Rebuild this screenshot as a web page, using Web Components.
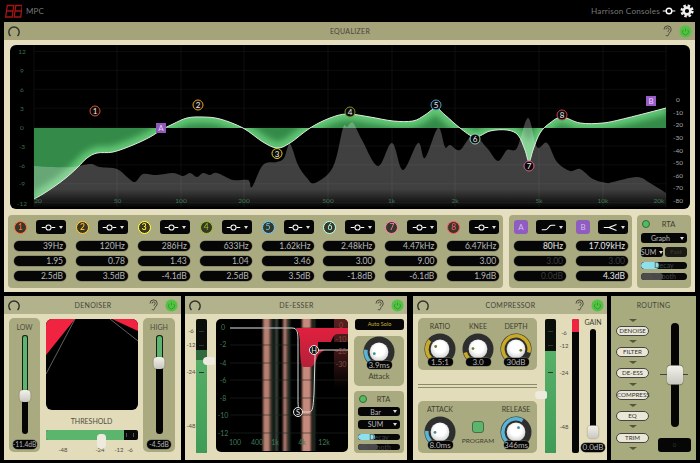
<!DOCTYPE html>
<html>
<head>
<meta charset="utf-8">
<title>MPC</title>
<style>
  html, body { margin: 0; background: #000; }
  body { width: 700px; height: 463px; overflow: hidden; font-family: Lato, "Liberation Sans", sans-serif; }
  #bottom { display: flex; padding: 4px 0 0 4px; }
  mpc-panel.eq { margin: 0 5px 0 4px; }
</style>
</head>
<body>
<mpc-topbar></mpc-topbar>
<mpc-panel class="eq" title="EQUALIZER"><mpc-equalizer></mpc-equalizer></mpc-panel>
<div id="bottom">
  <mpc-panel title="DENOISER" style="width:177px;margin-right:4px"><mpc-denoiser></mpc-denoiser></mpc-panel>
  <mpc-panel title="DE-ESSER" style="width:222px;margin-right:6px"><mpc-deesser></mpc-deesser></mpc-panel>
  <mpc-panel title="COMPRESSOR" style="width:194px;margin-right:4px"><mpc-compressor></mpc-compressor></mpc-panel>
  <mpc-routing></mpc-routing>
</div>

<script>
const FONT = 'Lato, "Liberation Sans", sans-serif';

// catmull-rom through the points, good enough for the curves on the graphs
function smooth(pts) {
    let d = `M${pts[0][0]} ${pts[0][1]}`;
    for (let i = 0; i < pts.length - 1; i++) {
        let p0 = pts[i - 1] || pts[i], p1 = pts[i], p2 = pts[i + 1], p3 = pts[i + 2] || p2;
        let c1x = p1[0] + (p2[0] - p0[0]) / 6, c1y = p1[1] + (p2[1] - p0[1]) / 6;
        let c2x = p2[0] - (p3[0] - p1[0]) / 6, c2y = p2[1] - (p3[1] - p1[1]) / 6;
        d += `C${c1x.toFixed(1)} ${c1y.toFixed(1)} ${c2x.toFixed(1)} ${c2y.toFixed(1)} ${p2[0]} ${p2[1]}`;
    }
    return d;
}

function scaleText(items, anchor, color, size) {
    return items.map(i => `<text x="${i[1]}" y="${i[2]}" text-anchor="${anchor}" fill="${color}" font-size="${size}" font-family='${FONT}'>${i[0]}</text>`).join("");
}

const ICONS = {
    peak: `<path d="M1 6H6M14 6H19" stroke="#fff" stroke-width="1.4"/><circle cx="10" cy="6" r="3.4" fill="none" stroke="#fff" stroke-width="1.4"/>`,
    low: `<path d="M1 9H6C10 9 10 3 14 3H19" fill="none" stroke="#fff" stroke-width="1.4"/>`,
    high: `<path d="M1 6H8L18 2M8 6L18 10" fill="none" stroke="#fff" stroke-width="1.4"/>`
};

class McTopbar extends HTMLElement {
    constructor() { super(); this.attachShadow({ mode: 'open' }); }
    connectedCallback() {
        this.shadowRoot.innerHTML = `
        <style>
            :host { display: flex; align-items: center; height: 22px; padding: 0 6px 0 4px; box-sizing: border-box; color: #777; font: 8px ${FONT}; }
            .mpc { margin-left: 4px; flex: 1; letter-spacing: .1px; }
            .who { font-size: 8.2px; letter-spacing: .2px; margin-right: 2px; }
            svg { display: block; }
        </style>
        <svg width="18" height="15" viewBox="0 0 18 15"><g fill="none" stroke="#a31616" stroke-width="1.3" transform="skewX(-8) translate(2 0)"><path d="M1.5 1.5H8V7H1.5ZM1.5 7V13H8V7"/><path d="M10 1.5H16.5V7H10ZM10 7V13H16.5V7"/></g></svg>
        <span class="mpc">MPC</span>
        <span class="who">Harrison Consoles</span>
        <svg width="14" height="12" viewBox="0 0 20 12" style="margin-right:4px"><circle cx="10" cy="6" r="4" fill="none" stroke="#fff" stroke-width="2"/><path d="M1 6H6M14 6H19" stroke="#fff" stroke-width="1.6"/></svg>
        <svg width="14" height="14" viewBox="0 0 14 14"><circle cx="7" cy="7" r="3.4" fill="none" stroke="#eee" stroke-width="2.6"/><circle cx="7" cy="7" r="5.3" fill="none" stroke="#eee" stroke-width="2.6" stroke-dasharray="2.4 1.76"/></svg>`;
    }
}
customElements.define('mpc-topbar', McTopbar);

class McPanel extends HTMLElement {
    constructor() { super(); this.attachShadow({ mode: 'open' }); }
    connectedCallback() {
        let small = this.getAttribute("title") !== "EQUALIZER";
        this.shadowRoot.innerHTML = `
        <style>
            :host { display: block; background: ${small ? "#e3dcba" : "#e6dfbf"}; }
            header { display: flex; align-items: center; height: 18px; padding: 0 3px 0 4px; background: ${small ? "#b2b28c" : "#a4a37a"}; color: #45453a; font: 7px ${FONT}; letter-spacing: .3px; }
            .l, .r { width: 30px; display: flex; }
            .r { justify-content: flex-end; }
            .t { flex: 1; text-align: center; }
            svg { display: block; }
            .ear { margin-right: 7px; }
        </style>
        <header>
            <div class="l"><svg width="12" height="12" viewBox="0 0 12 12"><path d="M2.5 11A5.2 5.2 0 1 1 9.5 11" fill="none" stroke="#2f2f28" stroke-width="1.4"/></svg></div>
            <span class="t">${this.getAttribute("title")}</span>
            <div class="r"><svg class="ear" width="9" height="12" viewBox="0 0 9 12"><path d="M1 4.5a3.6 3.6 0 0 1 7.2 0c0 2.6-2.4 3-2.6 5-.2 1.7-2.2 1.8-2.8.6M3 4.5a1.6 1.6 0 0 1 3.2 0c0 1.2-1.2 1.2-1.4 2.4" fill="none" stroke="#33332b" stroke-width=".8"/></svg>
            <svg width="13" height="13" viewBox="0 0 13 13"><circle cx="6.5" cy="6.5" r="6" fill="#52c243"/><path d="M4.3 4.8a3 3 0 1 0 4.4 0M6.5 3.5V6.5" fill="none" stroke="#3a9a33" stroke-width="1"/></svg></div>
        </header>
        <slot></slot>`;
    }
}
customElements.define('mpc-panel', McPanel);

class McPill extends HTMLElement {
    constructor() { super(); this.attachShadow({ mode: 'open' }); }
    connectedCallback() {
        let dim = this.hasAttribute("dim");
        let bright = this.hasAttribute("bright");
        this.shadowRoot.innerHTML = `
        <style>
            :host { display: block; height: 10px; line-height: 10px; box-sizing: border-box; background: #060606; border-radius: 5px; box-shadow: 0 0 0 .5px #6e6e5c; padding: 0 3px; text-align: right; color: ${dim ? "#3b3b3b" : bright ? "#e6e6e6" : "#b8b8b8"}; font: 8.5px/10px ${FONT}; white-space: nowrap; }
            :host([center]) { text-align: center; padding: 0; font-size: var(--pill-size, 8px); }
        </style><slot></slot>`;
    }
}
customElements.define('mpc-pill', McPill);

class McDrop extends HTMLElement {
    constructor() { super(); this.attachShadow({ mode: 'open' }); }
    connectedCallback() {
        let icon = this.getAttribute("icon");
        this.shadowRoot.innerHTML = `
        <style>
            :host { display: flex; align-items: center; justify-content: center; gap: 3px; background: #060606; border-radius: 3px; color: #bbb; font: 7px ${FONT}; height: var(--h, 14px); box-sizing: border-box; }
            svg { display: block; }
            i { width: 0; height: 0; border: 2px solid transparent; border-top: 3px solid #ddd; border-bottom: 0; }
            span { flex: 1; text-align: center; }
            :host([icon]) span { display: none; }
            :host([icon]) { padding-left: 1px; }
            :host(:not([icon])) { padding: 0 3px; }
        </style>
        ${icon ? `<svg width="15" height="9" viewBox="0 0 20 12">${ICONS[icon]}</svg>` : ""}
        <span><slot></slot></span><i></i>`;
    }
}
customElements.define('mpc-drop', McDrop);

class McBand extends HTMLElement {
    constructor() { super(); this.attachShadow({ mode: 'open' }); }
    connectedCallback() {
        let c = this.getAttribute("color");
        let n = this.getAttribute("n");
        let purple = n === "A" || n === "B";
        let dimq = this.hasAttribute("dimq"), dimg = this.hasAttribute("dimg"), br = purple ? "bright" : "";
        this.shadowRoot.innerHTML = `
        <style>
            :host { display: block; width: 52px; }
            .head { display: grid; grid-template-columns: 15px 30px; column-gap: 7px; align-items: center; margin-bottom: 7px; }
            .num { width: 11px; height: 11px; border: 1.5px solid ${c}; border-radius: 50%; background: #2a2a1e; color: ${c}; font: 8.5px/11px ${FONT}; text-align: center; filter: brightness(1.3); }
            .sq { width: 14px; height: 14px; border-radius: 3px; background: #8f5cc0; color: #d5bdf0; font: 8px/14px ${FONT}; text-align: center; }
            mpc-pill + mpc-pill { margin-top: 5px; }
        </style>
        <div class="head">
            ${purple ? `<div class="sq">${n}</div>` : `<div class="num">${n}</div>`}
            <mpc-drop icon="${this.getAttribute("kind") || "peak"}"></mpc-drop>
        </div>
        <mpc-pill ${br}>${this.getAttribute("f")}</mpc-pill>
        <mpc-pill ${dimq ? "dim" : br}>${this.getAttribute("q")}</mpc-pill>
        <mpc-pill ${dimg ? "dim" : br}>${this.getAttribute("g")}</mpc-pill>`;
    }
}
customElements.define('mpc-band', McBand);

class McSlide extends HTMLElement {
    constructor() { super(); this.attachShadow({ mode: 'open' }); }
    connectedCallback() {
        this.shadowRoot.innerHTML = `
        <style>
            :host { display: block; position: relative; height: 7px; background: #080808; border-radius: 4px; overflow: hidden; }
            b { display: block; height: 100%; width: ${this.getAttribute("fill")}; background: ${this.getAttribute("color")}; border-radius: 4px; }
            span { position: absolute; inset: 0; text-align: center; color: ${this.getAttribute("textc") || "#444"}; font: 7px/7px ${FONT}; }
        </style><b></b><span><slot></slot></span>`;
    }
}
customElements.define('mpc-slide', McSlide);

class McRta extends HTMLElement {
    constructor() { super(); this.attachShadow({ mode: 'open' }); }
    connectedCallback() {
        let graph = this.getAttribute("mode") === "graph";
        this.shadowRoot.innerHTML = `
        <style>
            :host { display: flex; flex-direction: column; --h: 10px; background: #a9aa80; border-radius: 4px; box-sizing: border-box; padding: 3px 4px; color: #40402f; font: 7.5px ${FONT}; }
            .top { display: flex; align-items: center; height: 12px; margin-bottom: 3px; }
            .led { width: 8px; height: 8px; border-radius: 50%; background: #55bb5f; border: 1px solid #2d6a39; box-sizing: border-box; margin-left: 1px; }
            .top span { flex: 1; text-align: center; }
            .two { display: grid; grid-template-columns: 22px 22px; gap: 2px; margin-top: 4px; }
            mpc-drop + mpc-drop { margin-top: 4px; }
            .blank { background: #1a1a14; border-radius: 3px; color: #3a3a30; text-align: center; font: 6.5px/10px ${FONT}; }
            mpc-slide { margin-top: 5px; }
        </style>
        <div class="top"><div class="led"></div><span>RTA</span></div>
        <mpc-drop>${graph ? "Graph" : "Bar"}</mpc-drop>
        ${graph ? `<div class="two"><mpc-drop>SUM</mpc-drop><div class="blank">Fast</div></div>`
                : `<mpc-drop>SUM</mpc-drop>`}
        <mpc-slide fill="40%" color="#8de0ee" textc="#3c4a4e">Decay</mpc-slide>
        <mpc-slide fill="48%" color="#4c4c4c" style="margin-top:4px">Smooth</mpc-slide>`;
    }
}
customElements.define('mpc-rta', McRta);

class McEqgraph extends HTMLElement {
    constructor() { super(); this.attachShadow({ mode: 'open' }); }
    connectedCallback() {
        const curve = [[34,199],[43,194],[55,186],[67,177],[78,167],[87,158],[97,153],[113,152],[133,145],[150,137],[161,130],[173,124],[187,118],[203,117],[220,119],[243,128],[263,142],[277,148],[290,143],[310,128],[330,118],[347,114],[370,117],[393,121],[413,121],[425,115],[436,108],[445,115],[460,128],[475,137],[490,131],[507,130],[518,135],[525,150],[529,162],[533,150],[540,133],[550,123],[562,117],[580,123],[603,123],[627,118],[666,108]];
        const spec = [[34,166],[50,167],[73,167],[90,164],[100,167],[117,169],[127,177],[135,182],[143,174],[157,175],[173,173],[183,176],[190,173],[197,177],[203,173],[210,175],[217,173],[233,180],[248,180],[252,187],[263,165],[277,162],[284,158],[290,144],[298,165],[307,178],[315,183],[333,167],[343,128],[347,127],[353,123],[362,140],[378,166],[392,143],[403,170],[418,143],[425,158],[438,128],[445,147],[450,145],[460,150],[473,135],[487,148],[498,161],[507,150],[517,148],[528,118],[537,147],[547,143],[557,162],[570,171],[580,169],[593,179],[607,183],[613,182],[637,177],[650,183],[666,193]];
        const cd = smooth(curve);
        const nodes = [[1,95,111,"#d9542f"],[2,198,105,"#e8a020"],[3,277,153.5,"#e8d020"],[4,350,112,"#7c9a20"],[5,436,105,"#4aa0d0"],[6,475,139,"#8fd0c0"],[7,529,166,"#d06090"],[8,562,115,"#d04050"]];
        let h = "", v = "";
        for (let i = 0; i < 9; i++) h += `<path d="M34 ${51.5 + i * 18.9}H666"/>`;
        [34,117,181,244,328,392,455,539,603,666].forEach(x => v += `<path d="M${x} 45V207"/>`);
        this.shadowRoot.innerHTML = `
        <style>
            :host { display: block; height: 164px; background: #000; border-radius: 6px; overflow: hidden; }
            svg { display: block; }
        </style>
        <svg width="680" height="164" viewBox="10 45 680 164">
            <defs>
                <clipPath id="c"><path d="${cd}L666 128H34Z"/></clipPath>
                <filter id="b" x="-5%" y="-20%" width="110%" height="140%"><feGaussianBlur stdDeviation="3"/></filter>
                <linearGradient id="s" x1="0" y1="0" x2="0" y2="1" gradientUnits="objectBoundingBox"><stop offset=".8" stop-color="#fff" stop-opacity=".25"/><stop offset="1" stop-color="#fff" stop-opacity=".02"/></linearGradient>
            </defs>
            <g stroke="#141414" stroke-width=".6">${h}</g>
            <g stroke="#1a1a1a" stroke-width=".6">${v}</g>
            <g clip-path="url(#c)">
                <rect x="34" y="100" width="632" height="110" fill="#348a48"/>
                <path d="${cd}" fill="none" stroke="#62c874" stroke-width="12" filter="url(#b)"/>
            </g>
            <path d="${smooth(spec)}L666 207H34Z" fill="url(#s)"/>
            <path d="${cd}" fill="none" stroke="#dfe8dc" stroke-width="1"/>
            ${scaleText([["12",22,53.5],["9",22,72.5],["6",22,91.5],["3",22,110.5],["0",22,129.5],["-3",22,148.5],["-6",22,167.5],["-9",22,186],["-12",22,205.5]], "middle", "#3b6e4b", 6.5)}
            ${scaleText([["20",38,203],["50",117.5,203],["100",181,203],["200",244,203],["500",328,203],["1k",391.5,203],["2k",455,203],["5k",539,203],["10k",603,203],["20k",659,203]], "middle", "#3f7a58", 6.5)}
            ${scaleText([["0",678,102],["-10",678,114.5],["-20",678,127],["-30",678,139.5],["-40",678,152.5],["-50",678,165],["-60",678,177.5],["-70",678,190],["-80",678,202.5]], "middle", "#a8a8a8", 6.5)}
            ${nodes.map(n => `<circle cx="${n[1]}" cy="${n[2]}" r="5" fill="#0a0a0a" stroke="${n[3]}" stroke-width="1"/><text x="${n[1]}" y="${n[2] + 3}" text-anchor="middle" fill="#eee" font-size="8" font-family='${FONT}'>${n[0]}</text>`).join("")}
            <rect x="156" y="123" width="10" height="10" fill="#9058b8"/><text x="161" y="131" text-anchor="middle" fill="#e4d4f2" font-size="8" font-family='${FONT}'>A</text>
            <rect x="646" y="96" width="10" height="10" fill="#9a5cc8"/><text x="651" y="104" text-anchor="middle" fill="#e4d4f2" font-size="8" font-family='${FONT}'>B</text>
        </svg>`;
    }
}
customElements.define('mpc-eqgraph', McEqgraph);

class McEqualizer extends HTMLElement {
    constructor() { super(); this.attachShadow({ mode: 'open' }); }
    connectedCallback() {
        const bands = [
            [1,"#d9542f","39Hz","1.95","2.5dB"],[2,"#e8a020","120Hz","0.78","3.5dB"],[3,"#e8d020","286Hz","1.43","-4.1dB"],[4,"#7c9a20","633Hz","1.04","2.5dB"],
            [5,"#4aa0d0","1.62kHz","3.46","3.5dB"],[6,"#8fd0c0","2.48kHz","3.00","-1.8dB"],[7,"#d06090","4.47kHz","9.00","-6.1dB"],[8,"#d04050","6.47kHz","3.00","1.9dB"]];
        this.shadowRoot.innerHTML = `
        <style>
            :host { display: block; padding: 5px 5px 4px 6px; height: 252px; box-sizing: border-box; }
            .row { display: flex; margin: 6px -1px 0 -2px; gap: 5px; }
            .sec { height: 73px; box-sizing: border-box; background: #a9aa80; border-radius: 4px; padding: 5px 6px; display: flex; gap: 10px; }
            .eq { width: 495px; gap: 9.9px; }
            .ab { width: 123px; margin-left: 1px; padding-left: 5px; }
            mpc-rta { width: 54px; height: 73px; }
        </style>
        <mpc-eqgraph></mpc-eqgraph>
        <div class="row">
            <div class="sec eq">${bands.map(b => `<mpc-band n="${b[0]}" color="${b[1]}" f="${b[2]}" q="${b[3]}" g="${b[4]}"></mpc-band>`).join("")}</div>
            <div class="sec ab">
                <mpc-band n="A" kind="low" f="80Hz" q="3.00" g="0.0dB" dimq dimg></mpc-band>
                <mpc-band n="B" kind="high" f="17.09kHz" q="3.00" g="4.3dB" dimq></mpc-band>
            </div>
            <mpc-rta mode="graph"></mpc-rta>
        </div>`;
    }
}
customElements.define('mpc-equalizer', McEqualizer);

// vertical fader: track, optional green part over the thumb
class McFader extends HTMLElement {
    constructor() { super(); this.attachShadow({ mode: 'open' }); }
    connectedCallback() {
        let w = this.getAttribute("w") || 6, h = this.getAttribute("h");
        let pos = +this.getAttribute("pos"), green = this.hasAttribute("green");
        let tw = this.getAttribute("tw") || 11, th = this.getAttribute("th") || 12;
        this.shadowRoot.innerHTML = `
        <style>
            :host { display: block; position: relative; width: ${w}px; height: ${h}px; background: #050505; border-radius: ${w / 2}px; }
            .g { position: absolute; left: 0; right: 0; top: 0; height: ${pos}px; background: #5cb56c; border-radius: ${w / 2}px ${w / 2}px 0 0; box-shadow: inset 0 0 0 1px #1a1a1a; }
            .t { position: absolute; left: 50%; top: ${pos}px; width: ${tw}px; height: ${th}px; transform: translate(-50%, -50%); background: linear-gradient(#f4f2ea, #c8c8c0); border-radius: 4px; box-shadow: 0 0 1px #333; }
        </style>
        ${green ? `<div class="g"></div>` : ""}<div class="t"></div>`;
    }
}
customElements.define('mpc-fader', McFader);

// level meter with the side handle
class McMeter extends HTMLElement {
    constructor() { super(); this.attachShadow({ mode: 'open' }); }
    connectedCallback() {
        let from = +this.getAttribute("from"), thumb = this.getAttribute("thumb");
        let ticks = [12, 26, 53].map(t => `<u style="top:${t}px"></u>`).join("");
        this.shadowRoot.innerHTML = `
        <style>
            :host { display: block; position: relative; width: 11px; height: 134px; background: #0a0f0a; border-radius: 2px; }
            .g { position: absolute; left: 0; right: 0; bottom: 0; top: ${from}px; background: linear-gradient(#58b068, #3f9c57); border-radius: 0 0 2px 2px; }
            .dark { position: absolute; left: 0; right: 0; top: ${from}px; height: ${this.getAttribute("dark") || 0}px; background: #2f6b3e; }
            u { position: absolute; left: 3px; width: 5px; height: 1px; background: #333; }
            .t { position: absolute; left: ${this.getAttribute("tleft") || 7}px; top: ${thumb}px; width: 12px; height: 8px; transform: translateY(-50%); background: #eeeadf; border-radius: 4px 2px 2px 4px; }
        </style>
        <div class="g"></div><div class="dark"></div>${ticks}<div class="t"></div>`;
    }
}
customElements.define('mpc-meter', McMeter);

class McKnob extends HTMLElement {
    constructor() { super(); this.attachShadow({ mode: 'open' }); }
    connectedCallback() {
        let c = this.getAttribute("color"), a = +this.getAttribute("angle"), dot = +this.getAttribute("dot");
        const pt = (deg, r) => {
            let rad = (deg - 90) * Math.PI / 180;
            return [(16 + r * Math.cos(rad)).toFixed(2), (16 + r * Math.sin(rad)).toFixed(2)];
        };
        let s = pt(-135, 13.2), e = pt(-135 + a, 13.2), d = pt(dot, 5);
        this.shadowRoot.innerHTML = `
        <style>
            :host { display: block; position: relative; width: 32px; height: 33px; }
            svg { display: block; }
            mpc-pill { position: absolute; left: 3.5px; width: 25px; top: 25px; height: 8px; line-height: 8px; }
        </style>
        <svg width="32" height="32" viewBox="0 0 32 32">
            <defs><radialGradient id="k" cx=".5" cy=".4" r=".6"><stop offset=".5" stop-color="#fff"/><stop offset="1" stop-color="#cfcfcf"/></radialGradient></defs>
            <circle cx="16" cy="16" r="15.5" fill="#2e2e2e"/>
            <path d="M${s[0]} ${s[1]}A13.2 13.2 0 ${a > 180 ? 1 : 0} 1 ${e[0]} ${e[1]}" fill="none" stroke="${c}" stroke-width="3.6"/>
            <circle cx="16" cy="16" r="9.4" fill="url(#k)"/>
            <circle cx="${d[0]}" cy="${d[1]}" r="1.4" fill="${this.getAttribute("dotc") || "#6f7a20"}"/>
        </svg>
        <mpc-pill center>${this.getAttribute("value")}</mpc-pill>`;
    }
}
customElements.define('mpc-knob', McKnob);

class McDenoiser extends HTMLElement {
    constructor() { super(); this.attachShadow({ mode: 'open' }); }
    connectedCallback() {
        this.shadowRoot.innerHTML = `
        <style>
            :host { display: grid; grid-template-columns: 31px 92px 32px; column-gap: 5.5px; padding: 4px 0 8px 5px; height: 146px; box-sizing: border-box; color: #4d4d3f; font: 7px ${FONT}; --pill-size: 6.6px; }
            .side { background: #a9aa80; border-radius: 5px; display: flex; flex-direction: column; align-items: center; height: 134px; padding-top: 4px; box-sizing: border-box; }
            .side span { line-height: 10px; margin-bottom: 3px; }
            .side mpc-pill { width: 24px; height: 9px; line-height: 9px; margin-top: 6px; }
            .mid { display: flex; flex-direction: column; padding-top: 1px; }
            svg { display: block; }
            .th { text-align: center; line-height: 10px; margin: 6px 0 4px; }
            .bar { position: relative; height: 10px; background: #0a0a0a; border-radius: 2px; }
            .bar b { display: block; width: 78px; height: 10px; background: #5cb56c; border-radius: 2px 0 0 2px; }
            .thumb { position: absolute; left: 51px; top: 4px; width: 9px; height: 15px; background: #eeeadf; border-radius: 4px 4px 5px 5px; }
            .ticks { position: absolute; right: 4px; top: 3px; width: 6px; height: 4px; border-left: 1px solid #555; border-right: 1px solid #555; }
        </style>
        <div class="side"><span>LOW</span><mpc-fader h="99" pos="61" green></mpc-fader><mpc-pill center>-11.4dB</mpc-pill></div>
        <div class="mid">
            <svg width="92" height="91" viewBox="46 319 92 91" style="border-radius:6px;background:#000">
                <path d="M46 319H75L46 355Z" fill="#f02340"/>
                <path d="M112 319H138V331Z" fill="#f02340"/>
                <path d="M75 319L46 374M110 319L138 341" stroke="#8a8a8a" stroke-width=".7" fill="none"/>
            </svg>
            <div class="th">THRESHOLD</div>
            <div class="bar"><b></b><div class="ticks"></div><div class="thumb"></div></div>
            <svg width="92" height="14" viewBox="46 440 92 14">${scaleText([["-48",63,452],["-24",100,452],["-12",119,452],["-6",130,452]], "middle", "#4d4d3f", 6)}</svg>
        </div>
        <div class="side"><span>HIGH</span><mpc-fader h="99" pos="28" w="7" green></mpc-fader><mpc-pill center>-4.5dB</mpc-pill></div>`;
    }
}
customElements.define('mpc-denoiser', McDenoiser);

class McDeesser extends HTMLElement {
    constructor() { super(); this.attachShadow({ mode: 'open' }); }
    connectedCallback() {
        const stripes = [[263,7,"#b5806f"],[271,2,"#2f4036"],[275,3,"#3c4a40"],[283,4,"#a8786a"],[288,2,"#2f4036"],[302,9,"#c68a7c"],[313,2,"#2f4036"]];
        this.shadowRoot.innerHTML = `
        <style>
            :host { display: grid; grid-template-columns: 10px 11px 141px 56px; padding: 5px 0 7px 1px; height: 146px; box-sizing: border-box; color: #4d4d3f; font: 7px ${FONT}; }
            svg { display: block; }
            .graph { margin-left: 9px; }
            .right { margin-left: 6px; display: flex; flex-direction: column; width: 50px; }
            .solo { height: 11px; background: #060606; border-radius: 3px; color: #cbb23a; font: 5.5px/11px ${FONT}; text-align: center; margin: 0 0 6px 1px; }
            .att { height: 50px; background: #a9aa80; border-radius: 5px; display: flex; flex-direction: column; align-items: center; color: #40402f; font-size: 7.5px; margin-bottom: 5px; }
            .att span { margin-top: 3px; line-height: 10px; }
            mpc-rta { height: 62px; width: 50px; }
        </style>
        <svg width="10" height="134" viewBox="186 319 10 134">${scaleText([["-6",191,333],["-12",191,347],["-24",191,374],["-48",191,428]], "middle", "#4d4d3f", 6)}</svg>
        <mpc-meter from="31" dark="10" thumb="42" tleft="7"></mpc-meter>
        <svg class="graph" width="132" height="133" viewBox="216 320 132 133" style="border-radius:5px;background:#000">
            <defs>
                <linearGradient id="r" x1="0" y1="0" x2="0" y2="1"><stop offset="0" stop-color="#5a1f1f"/><stop offset=".5" stop-color="#3a1515"/><stop offset="1" stop-color="#000"/></linearGradient>
                <linearGradient id="p" x1="0" y1="0" x2="0" y2="1"><stop offset="0" stop-color="#e0203f"/><stop offset="1" stop-color="#b52038"/></linearGradient>
                <filter id="soft" x="-5%" y="0" width="110%" height="100%"><feGaussianBlur stdDeviation=".8 0"/></filter>
            </defs>
            <rect x="334" y="320" width="14" height="70" fill="url(#r)"/>
            <g filter="url(#soft)">${stripes.map(s => `<rect x="${s[0]}" y="320" width="${s[1]}" height="132" fill="${s[2]}"/>`).join("")}</g>
            <g stroke="#1e2a22" stroke-width=".6"><path d="M230 329H348M230 346H348M230 364H348M230 381H348M230 399H348M230 416H348M230 434H348"/></g>
            <path d="M296 329H348V335H338C334 335 333 338 331 343C328 352 322 351 318 356C316 362 314 368 310 368H304C301 368 300 360 300 345C300 336 298 332 296 329Z" fill="url(#p)"/>
            <path d="M318 343H348V351H318Z" fill="#000"/>
            <path d="M230 329H292C298 329 298 334 298 345V400C298 408 298 413 304 413H309C313 413 313 408 314 395L315 358C315 352 316 351 322 351H348" fill="none" stroke="#d8d8d8" stroke-width="1"/>
            ${scaleText([["0",223,331],["-2",223,348],["-4",223,367],["-6",223,384],["-8",223,402],["-10",223,419],["-12",223,437]], "middle", "#3f7a58", 7)}
            ${scaleText([["100",235,446],["400",257,446],["1k",275,446],["4k",302,446],["12k",324,446]], "middle", "#3f7a58", 7)}
            ${scaleText([["0",341,329],["-10",341,343],["-20",341,355],["-30",341,368]], "middle", "#8a4a46", 7)}
            <circle cx="298" cy="413" r="4.5" fill="#0a0a0a" stroke="#eee" stroke-width="1"/><text x="298" y="416" text-anchor="middle" fill="#eee" font-size="7.5" font-family='${FONT}'>S</text>
            <circle cx="314" cy="351" r="4.5" fill="#0a0a0a" stroke="#eee" stroke-width="1"/><text x="314" y="354" text-anchor="middle" fill="#eee" font-size="7.5" font-family='${FONT}'>H</text>
        </svg>
        <div class="right">
            <div class="solo">Auto Solo</div>
            <div class="att"><mpc-knob color="#59b5d6" angle="55" dot="-110" dotc="#3f8f90" value="3.9ms"></mpc-knob><span>Attack</span></div>
            <mpc-rta mode="bar"></mpc-rta>
        </div>`;
    }
}
customElements.define('mpc-deesser', McDeesser);

class McCompressor extends HTMLElement {
    constructor() { super(); this.attachShadow({ mode: 'open' }); }
    connectedCallback() {
        this.shadowRoot.innerHTML = `
        <style>
            :host { display: grid; grid-template-columns: 119px 19px 16px 7px 26px; padding: 4px 0 7px 5px; height: 146px; box-sizing: border-box; color: #40402f; font: 7px ${FONT}; }
            .sec { background: #a9aa80; border-radius: 5px; height: 52px; padding: 3px 2px 0 3px; box-sizing: border-box; display: grid; grid-template-columns: repeat(3, 38px); justify-items: center; align-content: start; }
            .cell { display: flex; flex-direction: column; align-items: center; }
            .cell > span { line-height: 10px; margin-bottom: 2px; }
            hr { border: 0; height: 1px; background: #8a8a68; margin: 14px 0 0; }
            hr + hr { margin: 2px 0 13px; }
            .prog { width: 12px; height: 12px; background: #5cb56c; border: 1px solid #4a6a4a; border-radius: 3px; box-sizing: border-box; margin: 17px 0 3px; }
            .prog + span { font-size: 6.5px; line-height: 10px; }
            mpc-meter { margin: 1px 0 0 8px; }
            .sc { margin-top: 1px; }
            .narrow { position: relative; margin-top: 1px; width: 7px; height: 134px; background: #060606; border-radius: 2px; overflow: hidden; }
            .narrow b { display: block; height: 13px; background: #f02340; }
            .gain { display: flex; flex-direction: column; align-items: center; margin-left: 2px; }
            .gain > span { line-height: 8px; margin-bottom: 3px; }
            .gain mpc-pill { width: 24px; height: 9px; line-height: 9px; margin-top: 8px; }
            svg { display: block; }
        </style>
        <div>
            <div class="sec">
                <div class="cell"><span>RATIO</span><mpc-knob color="#c8aa28" angle="85" dot="-60" value="1.5:1"></mpc-knob></div>
                <div class="cell"><span>KNEE</span><mpc-knob color="#c8aa28" angle="30" dot="-85" value="3.0"></mpc-knob></div>
                <div class="cell"><span>DEPTH</span><mpc-knob color="#c8aa28" angle="240" dot="105" value="30dB"></mpc-knob></div>
            </div>
            <hr><hr>
            <div class="sec">
                <div class="cell"><span>ATTACK</span><mpc-knob color="#59b5d6" angle="50" dot="-95" dotc="#3f8f90" value="8.0ms"></mpc-knob></div>
                <div class="cell"><div class="prog"></div><span>PROGRAM</span></div>
                <div class="cell"><span>RELEASE</span><mpc-knob color="#59b5d6" angle="165" dot="30" dotc="#3f8f90" value="346ms"></mpc-knob></div>
            </div>
        </div>
        <mpc-meter from="32" thumb="76" tleft="-10"></mpc-meter>
        <svg class="sc" width="16" height="134" viewBox="556 319 16 134">${scaleText([["-6",564,335],["-12",564,348],["-24",564,375],["-48",564,429]], "middle", "#4d4d3f", 6)}</svg>
        <div class="narrow"><b></b></div>
        <div class="gain"><span>GAIN</span><mpc-fader h="106" pos="103" tw="11" th="13"></mpc-fader><mpc-pill center>0.0dB</mpc-pill></div>`;
    }
}
customElements.define('mpc-compressor', McCompressor);

class McRouting extends HTMLElement {
    constructor() { super(); this.attachShadow({ mode: 'open' }); }
    connectedCallback() {
        let names = ["DENOISE", "FILTER", "DE-ESS", "COMPRESS", "EQ", "TRIM"];
        let arrow = `<i></i>`;
        this.shadowRoot.innerHTML = `
        <style>
            :host { display: block; width: 85px; height: 164px; background: #a8ab7e; color: #45453a; font: 7px ${FONT}; }
            .t { height: 18px; line-height: 18px; text-align: center; letter-spacing: .3px; }
            .body { display: grid; grid-template-columns: 33px 33px; column-gap: 9px; padding: 4.5px 0 0 5px; }
            .list { display: flex; flex-direction: column; align-items: center; gap: 4.2px; }
            i { display: block; width: 0; height: 0; border: 4px solid transparent; border-top: 3px solid #55553f; border-bottom: 0; }
            .p { width: 33px; height: 10px; box-sizing: border-box; border: 1px solid #444; border-radius: 5px; background: #ebe7d6; text-align: center; font: 6.2px/8px ${FONT}; color: #333; white-space: nowrap; }
            .fad { display: flex; flex-direction: column; align-items: center; padding-top: 4.5px; }
            .box { width: 33px; height: 14px; background: #060606; border-radius: 3px; margin-top: 11px; color: #333; text-align: center; font: 6px/14px ${FONT}; }
            .line { position: relative; }
            .line:before { content: ""; position: absolute; left: -11px; width: 28px; top: 51px; height: 1px; background: #444; }
        </style>
        <div class="t">ROUTING</div>
        <div class="body">
            <div class="list">${arrow}${names.map(n => `<div class="p">${n}</div>${arrow}`).join("")}</div>
            <div class="fad"><div class="line"><mpc-fader w="8" h="104" pos="52" tw="16" th="19"></mpc-fader></div><div class="box">0</div></div>
        </div>`;
    }
}
customElements.define('mpc-routing', McRouting);
</script>
</body>
</html>
